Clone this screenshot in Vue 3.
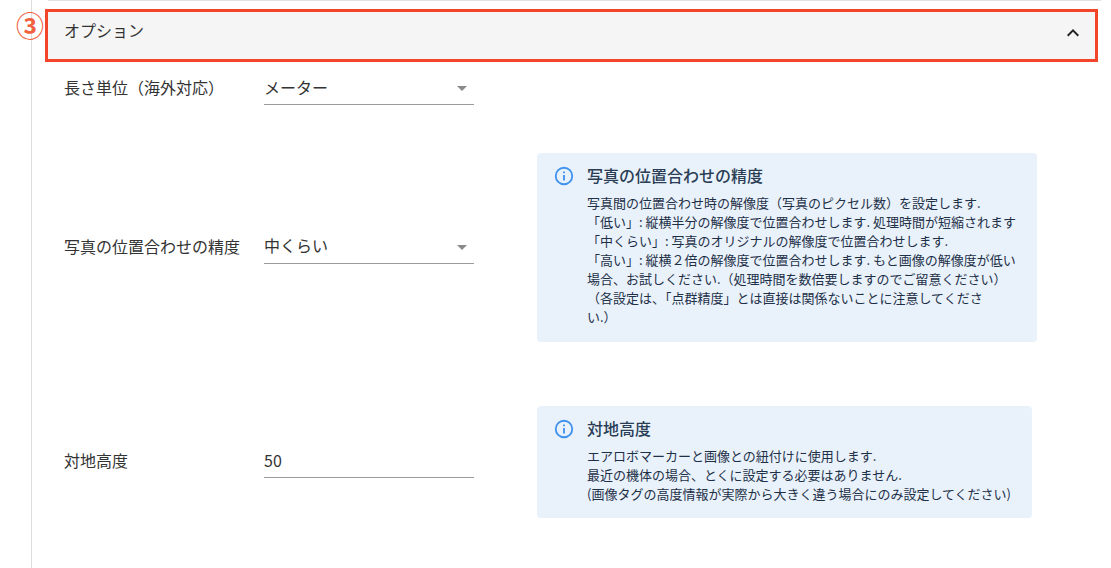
<script setup>
const lines1 = [
  '写真間の位置合わせ時の解像度（写真のピクセル数）を設定します.',
  '「低い」: 縦横半分の解像度で位置合わせします. 処理時間が短縮されます',
  '「中くらい」: 写真のオリジナルの解像度で位置合わせします.',
  '「高い」: 縦横２倍の解像度で位置合わせします. もと画像の解像度が低い',
  '場合、お試しください.（処理時間を数倍要しますのでご留意ください）',
  '（各設定は、「点群精度」とは直接は関係ないことに注意してくださ',
  'い.）',
]
const lines2 = [
  'エアロボマーカーと画像との紐付けに使用します.',
  '最近の機体の場合、とくに設定する必要はありません.',
  '(画像タグの高度情報が実際から大きく違う場合にのみ設定してください)',
]
</script>

<template>
  <div class="page">
    <div class="gutter"><span class="num">③</span></div>
    <div class="main">
      <div class="prev-edge"></div>
      <header class="head">
        <span class="head-title">オプション</span>
        <svg width="24" height="24" viewBox="0 0 24 24"><path d="M7.41 15.41 12 10.83l4.59 4.58L18 14l-6-6-6 6z" fill="#222"/></svg>
      </header>
      <div class="row r1">
        <label class="lbl">長さ単位（海外対応）</label>
        <div class="field"><span>メーター</span><i class="caret"></i></div>
      </div>
      <div class="row r2">
        <label class="lbl">写真の位置合わせの精度</label>
        <div class="field"><span>中くらい</span><i class="caret"></i></div>
        <aside class="note n1">
          <svg class="info" width="22" height="22" viewBox="0 0 24 24"><path d="M11 7h2v2h-2zm0 4h2v6h-2zm1-9a10 10 0 1 0 0 20 10 10 0 0 0 0-20zm0 18a8 8 0 1 1 0-16 8 8 0 0 1 0 16z" fill="#3f92ee"/></svg>
          <div>
            <h4>写真の位置合わせの精度</h4>
            <p v-for="l in lines1" :key="l">{{ l }}</p>
          </div>
        </aside>
      </div>
      <div class="row r3">
        <label class="lbl">対地高度</label>
        <div class="field"><span>50</span></div>
        <aside class="note n2">
          <svg class="info" width="22" height="22" viewBox="0 0 24 24"><path d="M11 7h2v2h-2zm0 4h2v6h-2zm1-9a10 10 0 1 0 0 20 10 10 0 0 0 0-20zm0 18a8 8 0 1 1 0-16 8 8 0 0 1 0 16z" fill="#3f92ee"/></svg>
          <div>
            <h4>対地高度</h4>
            <p v-for="l in lines2" :key="l">{{ l }}</p>
          </div>
        </aside>
      </div>
    </div>
  </div>
</template>

<style>
html, body { margin: 0; background: #fff; }
</style>

<style scoped>
.page {
  display: flex;
  width: 1111px;
  height: 568px;
  overflow: hidden;
  font-family: "Noto Sans CJK JP", "Liberation Sans", sans-serif;
  color: #333;
}
.gutter {
  width: 31px;
  flex: none;
  border-right: 1px solid #dcdcdc;
  position: relative;
}
.num {
  position: absolute;
  left: 16px;
  top: 7px;
  color: #f2613f;
  font-size: 28px;
  line-height: 36px;
  font-weight: 700;
}
.main { flex: 1; padding: 0 13px 0 13px; min-width: 0; }
.prev-edge {
  height: 1px;
  margin: 0 -3px 8px 3px;
  background: #e2e2e2;
}
.head {
  height: 53px;
  box-sizing: border-box;
  border: 3px solid #f2452a;
  background: #f5f5f5;
  display: flex;
  align-items: center;
  justify-content: space-between;
  padding: 0 10px 6px 16px;
  font-size: 16px;
}
.head-title { padding-bottom: 6px; }
.row { display: flex; align-items: center; padding-left: 19px; }
.r1 { height: 52px; margin-top: 1px; margin-bottom: 38px; }
.r2 { margin-bottom: 64px; }
.lbl { width: 200px; flex: none; font-size: 16px; padding-bottom: 4px; }
.field {
  width: 210px;
  height: 32px;
  flex: none;
  box-sizing: border-box;
  border-bottom: 1px solid #9a9a9a;
  display: flex;
  align-items: center;
  justify-content: space-between;
  font-size: 16px;
  padding: 0 7px 4px 0;
}
.caret {
  width: 0; height: 0;
  border-left: 5px solid transparent;
  border-right: 5px solid transparent;
  border-top: 5px solid #8a8a8a;
  margin-top: 4px;
}
.note {
  margin-left: 63px;
  background: #e9f2fb;
  border-radius: 4px;
  display: flex;
  gap: 12px;
  padding: 11px 0 0 16px;
  box-sizing: border-box;
  color: #1e3048;
}
.n1 { width: 500px; height: 189px; }
.n2 { width: 495px; height: 112px; }
.info { flex: none; margin-top: 1px; }
h4 { margin: 0 0 7px; font-size: 16px; font-weight: 500; line-height: 22px; color: #2a3d55; }
p { margin: 0; font-size: 13px; line-height: 19px; white-space: nowrap; }
</style>
